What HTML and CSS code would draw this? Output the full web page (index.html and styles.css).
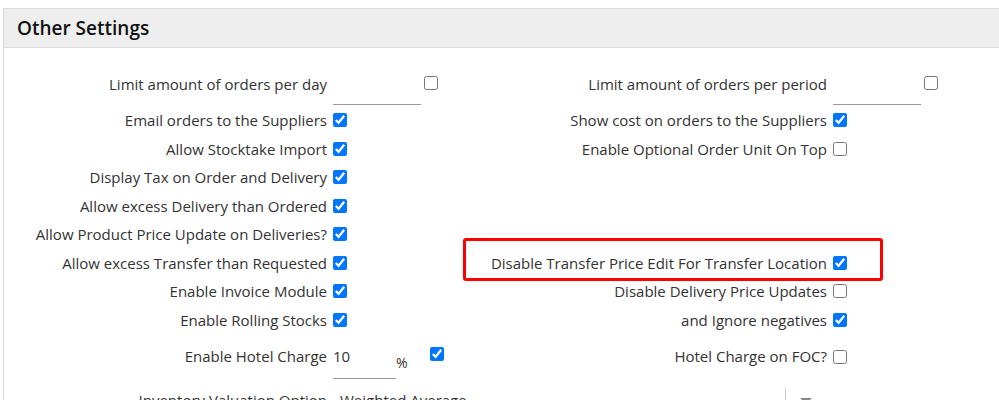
FILE: index.html
```html
<!DOCTYPE html>
<html>
<head>
<meta charset="utf-8">
<link rel="stylesheet" href="styles.css">
</head>
<body>
<div class="panel">
  <div class="panel-heading">Other Settings</div>
  <div class="panel-body">
    <div class="row row-tall">
      <div class="field">
        <span class="label">Limit amount of orders per day</span>
        <input class="line-input" type="text">
        <input class="cb cb-after" type="checkbox">
      </div>
      <div class="field">
        <span class="label">Limit amount of orders per period</span>
        <input class="line-input" type="text">
        <input class="cb cb-after" type="checkbox">
      </div>
    </div>
    <div class="row">
      <div class="field"><span class="label">Email orders to the Suppliers</span><input class="cb" type="checkbox" checked></div>
      <div class="field"><span class="label">Show cost on orders to the Suppliers</span><input class="cb" type="checkbox" checked></div>
    </div>
    <div class="row">
      <div class="field"><span class="label">Allow Stocktake Import</span><input class="cb" type="checkbox" checked></div>
      <div class="field"><span class="label">Enable Optional Order Unit On Top</span><input class="cb" type="checkbox"></div>
    </div>
    <div class="row">
      <div class="field"><span class="label">Display Tax on Order and Delivery</span><input class="cb" type="checkbox" checked></div>
      <div class="field"></div>
    </div>
    <div class="row">
      <div class="field"><span class="label">Allow excess Delivery than Ordered</span><input class="cb" type="checkbox" checked></div>
      <div class="field"></div>
    </div>
    <div class="row">
      <div class="field"><span class="label">Allow Product Price Update on Deliveries?</span><input class="cb" type="checkbox" checked></div>
      <div class="field"></div>
    </div>
    <div class="row">
      <div class="field"><span class="label">Allow excess Transfer than Requested</span><input class="cb" type="checkbox" checked></div>
      <div class="field highlighted">
        <span class="label">Disable Transfer Price Edit For Transfer Location</span><input class="cb" type="checkbox" checked>
        <div class="highlight-box"></div>
      </div>
    </div>
    <div class="row">
      <div class="field"><span class="label">Enable Invoice Module</span><input class="cb" type="checkbox" checked></div>
      <div class="field"><span class="label">Disable Delivery Price Updates</span><input class="cb" type="checkbox"></div>
    </div>
    <div class="row">
      <div class="field"><span class="label">Enable Rolling Stocks</span><input class="cb" type="checkbox" checked></div>
      <div class="field"><span class="label">and Ignore negatives</span><input class="cb" type="checkbox" checked></div>
    </div>
    <div class="row row-hotel">
      <div class="field">
        <span class="label">Enable Hotel Charge</span>
        <input class="line-input short" type="text" value="10">
        <span class="percent">%</span>
        <input class="cb cb-hotel" type="checkbox" checked>
      </div>
      <div class="field"><span class="label">Hotel Charge on FOC?</span><input class="cb cb-foc" type="checkbox"></div>
    </div>
    <div class="row row-select">
      <div class="field field-wide">
        <span class="label">Inventory Valuation Option</span>
        <div class="select">
          <span class="select-text">Weighted Average</span>
          <span class="select-sep"></span>
          <span class="select-arrow"></span>
        </div>
      </div>
    </div>
  </div>
</div>
</body>
</html>
```
FILE: styles.css
```css
html, body {
  margin: 0;
  padding: 0;
  overflow: hidden;
  background: #fff;
}
body {
  font-family: "Open Sans", "Liberation Sans", sans-serif;
  font-size: 15px;
  color: #333;
}
.panel {
  margin: 8px 0 0 3px;
  width: 1010px;
  border: 1px solid #dcdcdc;
  border-right: none;
}
.panel-heading {
  height: 38px;
  background: #eee;
  border-bottom: 1px solid #dcdcdc;
  padding-left: 13px;
  font-size: 19px;
  font-weight: 600;
  line-height: 38px;
  color: #111;
}
.panel-body {
  padding-top: 22px;
  height: 400px;
}
.row {
  display: grid;
  grid-template-columns: 500px 500px;
  height: 28.5px;
}
.row-tall {
  height: 36px;
}
.row-hotel {
  margin-top: 7.5px;
  height: 44px;
}
.field {
  display: flex;
  align-items: flex-start;
  position: relative;
}
.field-wide {
  grid-column: 1 / 3;
}
.label {
  width: 323px;
  padding-right: 2px;
  display: flex;
  justify-content: flex-end;
  line-height: 28px;
  white-space: nowrap;
  flex-shrink: 0;
}
.cb {
  width: 14px;
  height: 14px;
  margin: 7px 0 0 4px;
  accent-color: #0075ff;
}
.cb-after {
  margin-left: 3px;
  margin-top: 6px;
}
.line-input {
  width: 88px;
  height: 35px;
  margin: 0 0 0 4px;
  padding: 0 0 7px 0;
  border: none;
  border-bottom: 1px solid #999;
  box-sizing: border-box;
  font-family: inherit;
  font-size: 15px;
  color: #333;
  line-height: 28px;
  outline: none;
  background: transparent;
}
.line-input.short {
  width: 63px;
  height: 37px;
}
.percent {
  line-height: 28px;
  margin-top: 7px;
  width: 34px;
  font-size: 14px;
}
.cb-hotel {
  margin-left: 0;
  margin-top: 5px;
}
.cb-foc {
  margin-top: 8px;
}
.highlight-box {
  position: absolute;
  left: -41px;
  top: -11px;
  width: 414px;
  height: 37px;
  border: 3px solid #ff0000;
  border-radius: 3px;
  pointer-events: none;
}
.row-select {
  margin-top: 0;
}
.select {
  margin-left: 4px;
  width: 493px;
  height: 30px;
  display: flex;
  align-items: flex-start;
  position: relative;
}
.select-text {
  padding-left: 7px;
  line-height: 28px;
  flex: 1;
}
.select-sep {
  width: 1px;
  height: 28px;
  background: #ccc;
  margin-top: 2px;
}
.select-arrow {
  width: 0;
  height: 0;
  border-left: 6px solid transparent;
  border-right: 6px solid transparent;
  border-top: 6px solid #888;
  margin: 12px 14px 0 14px;
}
```
